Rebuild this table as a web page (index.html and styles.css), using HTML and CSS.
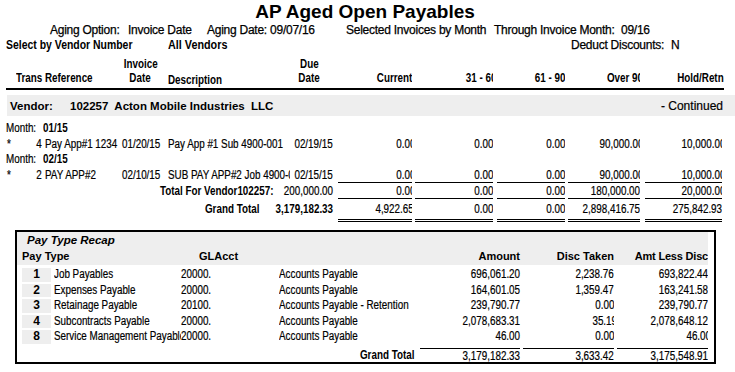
FILE: index.html
```html
<!DOCTYPE html>
<html>
<head>
<meta charset="utf-8">
<title>AP Aged Open Payables</title>
<link rel="stylesheet" href="styles.css">
</head>
<body>
<div class="page">
  <h1 class="title">AP Aged Open Payables</h1>

  <div class="params p1">
    <span class="pa">Aging Option:</span>
    <span class="pb">Invoice Date</span>
    <span class="pc">Aging Date: 09/07/16</span>
    <span class="pd">Selected Invoices by Month</span>
    <span class="pe">Through Invoice Month:</span>
    <span>09/16</span>
  </div>
  <div class="params p2">
    <span class="sel"><b class="sq87">Select by Vendor Number</b></span>
    <span class="allv"><b class="sq90">All Vendors</b></span>
    <span class="ded">Deduct Discounts:</span>
    <span>N</span>
  </div>

  <div class="colhead">
    <div class="h-ref"><span class="sx">Trans Reference</span></div>
    <div class="c-inv h-two"><span class="sx">Invoice</span><span class="sx">Date</span></div>
    <div class="c-desc h-desc"><span class="sx">Description</span></div>
    <div class="c-due h-two h-due"><span class="sx">Due</span><span class="sx">Date</span></div>
    <div class="c-cur m"><span class="sx">Current</span></div>
    <div class="c-31 m"><span class="sx cut">31 - 60</span></div>
    <div class="c-61 m"><span class="sx">61 - 90</span></div>
    <div class="c-90 m"><span class="sx cut">Over 90</span></div>
    <div class="c-hold m h-hold"><span class="sx over">Hold/Retn</span></div>
  </div>

  <div class="vendor">
    <span class="v-label">Vendor:</span>
    <span class="v-name">102257  Acton Mobile Industries  LLC</span>
    <span class="v-cont">- Continued</span>
  </div>

  <div class="month"><span class="m-lab"><span class="sx">Month:</span></span><b class="sx">01/15</b></div>
  <div class="drow">
    <span class="c-star"><span class="sx">*</span></span><span class="c-no r"><span class="sx">4</span></span><span class="c-ref"><span class="sx">Pay App#1 1234</span></span><span class="c-inv"><span class="sx">01/20/15</span></span><span class="c-desc"><span class="sx">Pay App #1 Sub 4900-001</span></span><span class="c-due r"><span class="sx">02/19/15</span></span><span class="c-cur m"><span class="sx cut">0.00</span></span><span class="c-31 m"><span class="sx">0.00</span></span><span class="c-61 m"><span class="sx">0.00</span></span><span class="c-90 m"><span class="sx cut">90,000.00</span></span><span class="c-hold m"><span class="sx cut">10,000.00</span></span>
  </div>
  <div class="month"><span class="m-lab"><span class="sx">Month:</span></span><b class="sx">02/15</b></div>
  <div class="drow ul">
    <span class="c-star"><span class="sx">*</span></span><span class="c-no r"><span class="sx">2</span></span><span class="c-ref"><span class="sx">PAY APP#2</span></span><span class="c-inv"><span class="sx">02/10/15</span></span><span class="c-desc"><span class="sx">SUB PAY APP#2 Job 4900-001</span></span><span class="c-due r"><span class="sx">02/15/15</span></span><span class="c-cur m"><span class="sx cut">0.00</span></span><span class="c-31 m"><span class="sx">0.00</span></span><span class="c-61 m"><span class="sx">0.00</span></span><span class="c-90 m"><span class="sx cut">90,000.00</span></span><span class="c-hold m"><span class="sx cut">10,000.00</span></span>
  </div>
  <div class="drow ul">
    <span class="t-label r"><b class="sx">Total For Vendor102257:</b></span><span class="t-amt r"><span class="sx">200,000.00</span></span><span class="c-cur m"><span class="sx cut">0.00</span></span><span class="c-31 m"><span class="sx">0.00</span></span><span class="c-61 m"><span class="sx">0.00</span></span><span class="c-90 m"><span class="sx">180,000.00</span></span><span class="c-hold m"><span class="sx cut">20,000.00</span></span>
  </div>
  <div class="drow dbl">
    <span class="t-label g-label r"><b class="sx">Grand Total</b></span><span class="t-amt r"><b class="sx">3,179,182.33</b></span><span class="c-cur m"><span class="sx cut1">4,922.65</span></span><span class="c-31 m"><span class="sx">0.00</span></span><span class="c-61 m"><span class="sx">0.00</span></span><span class="c-90 m"><span class="sx">2,898,416.75</span></span><span class="c-hold m"><span class="sx">275,842.93</span></span>
  </div>

  <section class="recap">
    <div class="recap-head">
      <div class="recap-title">Pay Type Recap</div>
      <div class="recap-cols">
        <span class="rh-pt">Pay Type</span>
        <span class="rh-gl">GLAcct</span>
        <span class="r-amt r">Amount</span>
        <span class="r-disc r">Disc Taken</span>
        <span class="r-less r rh-less">Amt Less Disc</span>
      </div>
    </div>
    <div class="rrow"><span class="r-no">1</span><span class="r-name"><span class="sx">Job Payables</span></span><span class="r-gl"><span class="sx">20000.</span></span><span class="r-desc"><span class="sx">Accounts Payable</span></span><span class="r-amt r"><span class="sx">696,061.20</span></span><span class="r-disc r"><span class="sx">2,238.76</span></span><span class="r-less r"><span class="sx">693,822.44</span></span></div>
    <div class="rrow"><span class="r-no">2</span><span class="r-name"><span class="sx">Expenses Payable</span></span><span class="r-gl"><span class="sx">20000.</span></span><span class="r-desc"><span class="sx">Accounts Payable</span></span><span class="r-amt r"><span class="sx">164,601.05</span></span><span class="r-disc r"><span class="sx">1,359.47</span></span><span class="r-less r"><span class="sx">163,241.58</span></span></div>
    <div class="rrow"><span class="r-no">3</span><span class="r-name"><span class="sx">Retainage Payable</span></span><span class="r-gl"><span class="sx">20100.</span></span><span class="r-desc"><span class="sx">Accounts Payable - Retention</span></span><span class="r-amt r"><span class="sx">239,790.77</span></span><span class="r-disc r"><span class="sx">0.00</span></span><span class="r-less r"><span class="sx">239,790.77</span></span></div>
    <div class="rrow"><span class="r-no">4</span><span class="r-name"><span class="sx">Subcontracts Payable</span></span><span class="r-gl"><span class="sx">20000.</span></span><span class="r-desc"><span class="sx">Accounts Payable</span></span><span class="r-amt r"><span class="sx">2,078,683.31</span></span><span class="r-disc r"><span class="sx cut">35.19</span></span><span class="r-less r"><span class="sx">2,078,648.12</span></span></div>
    <div class="rrow"><span class="r-no">8</span><span class="r-name"><span class="sx">Service Management Payable</span></span><span class="r-gl"><span class="sx">20000.</span></span><span class="r-desc"><span class="sx">Accounts Payable</span></span><span class="r-amt r"><span class="sx">46.00</span></span><span class="r-disc r"><span class="sx">0.00</span></span><span class="r-less r"><span class="sx cut">46.00</span></span></div>
    <div class="rtotal">
      <span class="rt-label r"><b class="sx">Grand Total</b></span><span class="r-amt r"><span class="sx">3,179,182.33</span></span><span class="r-disc r"><span class="sx">3,633.42</span></span><span class="r-less r"><span class="sx">3,175,548.91</span></span>
    </div>
  </section>
</div>
</body>
</html>
```

FILE: styles.css
```css
* { box-sizing: border-box; margin: 0; padding: 0; }

body {
  margin: 0;
  background: #fff;
  color: #000;
  font-family: "Liberation Sans", Arial, sans-serif;
}

.page {
  width: 735px;
  height: 372px;
  overflow: hidden;
}

/* narrow report text: Arial glyphs squeezed horizontally */
.sx {
  display: inline-block;
  flex: none;
  white-space: pre;
  transform: scaleX(0.82);
  transform-origin: 0 50%;
  -webkit-text-stroke: 0.2px currentColor;
}
b.sx { -webkit-text-stroke: 0; }
.r { justify-content: flex-end; }
.r .sx, .m .sx { transform-origin: 100% 50%; }
.cut { margin-right: -3px; }
.cut1 { margin-right: -1.5px; }
.over { margin-right: -2px; }

/* ---------- heading ---------- */
.title {
  width: 730px;
  height: 23px;
  padding-top: 1px;
  font-size: 19px;
  line-height: 22px;
  font-weight: bold;
  text-align: center;
}

.params {
  display: flex;
  height: 15px;
  font-size: 12px;
  line-height: 15px;
  letter-spacing: -0.25px;
  white-space: nowrap;
  -webkit-text-stroke: 0.25px currentColor;
}
.p1 { padding-left: 50px; }
.pa { width: 78px; }
.pb { width: 79px; }
.pc { width: 139px; }
.pd { width: 148px; }
.pe { width: 127px; }

.p2 { padding-left: 6px; }
.sel, .allv { letter-spacing: 0; -webkit-text-stroke: 0; }
.sel { width: 162px; }
.allv { width: 403px; }
.sq87, .sq90 { display: inline-block; transform-origin: 0 50%; }
.sq87 { transform: scaleX(0.87); }
.sq90 { transform: scaleX(0.9); }
.ded { width: 100px; }

/* ---------- column header ---------- */
.colhead {
  display: flex;
  align-items: flex-end;
  width: 718px;
  height: 33px;
  margin: 4px 0 0 6px;
  padding: 0 0 3px 1px;
  border-bottom: 2px solid #000;
  font-size: 12px;
  font-weight: bold;
  line-height: 14px;
}
.colhead > div { display: flex; }
.colhead .sx { -webkit-text-stroke: 0; }
.h-ref { width: 115px; padding-left: 9px; }
.h-two { flex-direction: column; align-items: center; padding-right: 9px; }
.h-two .sx { transform-origin: 50% 50%; }
.h-due { padding-right: 5px !important; }
.h-desc { margin-bottom: -2px; }
.colhead .m { overflow: hidden; }
.colhead .h-hold { overflow: visible; }

/* ---------- shared detail columns ---------- */
.c-star { width: 25px; }
.c-no { width: 10px; }
.c-ref { width: 77px; margin-left: 3px; overflow: hidden; }
.c-inv { width: 46px; }
.c-desc { width: 122px; overflow: hidden; }
.c-due { width: 44px; padding-right: 1px; }
.c-cur { width: 74px; margin-left: 4px; }
.c-31 { width: 78px; margin-left: 3px; }
.c-61 { width: 68px; margin-left: 4px; }
.c-90 { width: 72px; margin-left: 3px; }
.c-hold { width: 77px; margin-left: 5px; }
.m { justify-content: flex-end; overflow: hidden; }

/* ---------- vendor band ---------- */
.vendor {
  display: flex;
  align-items: center;
  height: 21px;
  margin: 5px 0 0 7px;
  padding: 0 12px 0 3px;
  background: #eeeeee;
  font-size: 11.5px;
  font-weight: bold;
  white-space: pre;
}
.v-label { width: 60px; }
.v-name { flex: 1; }
.v-cont { font-weight: normal; font-size: 12px; -webkit-text-stroke: 0.2px currentColor; }

/* ---------- detail rows ---------- */
.month {
  display: flex;
  height: 15px;
  padding-left: 6px;
  font-size: 12px;
  line-height: 15px;
}
.vendor + .month { margin-top: 5px; }
.m-lab { width: 37px; }

.drow {
  display: flex;
  height: 16px;
  padding-left: 7px;
  font-size: 12px;
  line-height: 16px;
}
.drow > span { display: flex; }
.ul .m { border-bottom: 1px solid #000; }
.dbl { height: 23px; line-height: 20px; }
.dbl .m { border-bottom: 3px double #000; }

.t-label { width: 266px; }
.t-amt { width: 61px; padding-right: 1px; }
.g-label { padding-right: 14px; }

/* ---------- recap ---------- */
.recap {
  width: 701px;
  height: 134px;
  margin: 8px 0 0 15px;
  border: 2px solid #000;
}
.recap-head {
  width: 691px;
  height: 33px;
  background: #eeeeee;
}
.recap-title {
  height: 16px;
  padding-left: 10px;
  font-size: 11.5px;
  line-height: 16px;
  font-weight: bold;
  font-style: italic;
}
.recap-cols {
  display: flex;
  height: 14px;
  margin-top: 1px;
  font-size: 11px;
  line-height: 14px;
  font-weight: bold;
  white-space: nowrap;
}
.recap-cols > span { display: flex; }
.rh-pt { width: 182px; padding-left: 5px; }
.rh-gl { width: 221px; }
.rh-less { letter-spacing: -0.2px; }

.rrow {
  display: flex;
  height: 15.5px;
  font-size: 12px;
  line-height: 15.5px;
}
.rrow > span, .rtotal > span { display: flex; }
.recap-head + .rrow { margin-top: 2px; }
.r-no {
  justify-content: center;
  width: 29px;
  height: 13.5px;
  margin: 1px 0 0 5px;
  line-height: 13.5px;
  background: #eeeeee;
  font-weight: bold;
}
.r-name { width: 127px; margin-left: 3px; overflow: hidden; }
.r-gl { width: 98px; }
.r-desc { width: 141px; overflow: hidden; }
.r-amt { width: 100px; }
.r-disc { width: 91px; margin-left: 3px; overflow: hidden; }
.r-less { width: 91px; margin-left: 3px; overflow: hidden; }

.rtotal {
  display: flex;
  height: 15px;
  margin-top: 3px;
  font-size: 12px;
  line-height: 14px;
}
.rt-label { width: 403px; padding-right: 6px; }
.rtotal .r-amt,
.rtotal .r-disc,
.rtotal .r-less { border-top: 1px solid #000; }
```
